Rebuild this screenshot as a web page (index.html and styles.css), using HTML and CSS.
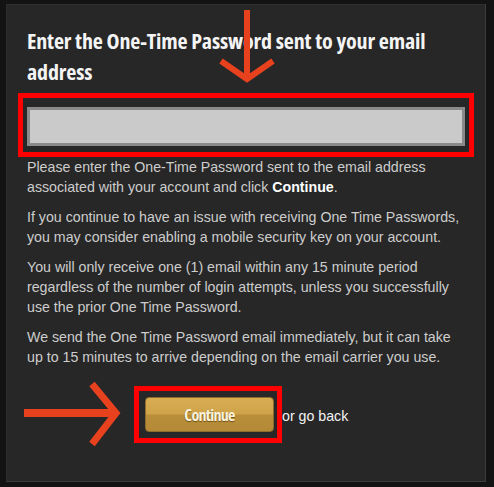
FILE: index.html
```html
<!DOCTYPE html>
<html lang="en">
<head>
    <meta charset="UTF-8">
    <title>One-Time Password</title>
    <link rel="stylesheet" href="styles.css">
</head>
<body>
    <div class="panel">
        <h1>Enter the One-Time Password sent to your email address</h1>
        <div class="highlight field">
            <input type="text" id="otp" class="otp">
        </div>
        <p>Please enter the One-Time Password sent to the email address associated with your account and click <b>Continue</b>.</p>
        <p>If you continue to have an issue with receiving One Time Passwords, you may consider enabling a mobile security key on your account.</p>
        <p>You will only receive one (1) email within any 15 minute period regardless of the number of login attempts, unless you successfully use the prior One Time Password.</p>
        <p>We send the One Time Password email immediately, but it can take up to 15 minutes to arrive depending on the email carrier you use.</p>
        <div class="actions">
            <div class="highlight">
                <button class="continue">Continue</button>
            </div>
            <span class="back">or go back</span>
        </div>
    </div>
    <svg class="arrows" width="494" height="487" viewBox="0 0 494 487">
        <g stroke="#e8411e" fill="none" stroke-linecap="butt" stroke-linejoin="miter">
            <path d="M247 10 V78" stroke-width="6"/>
            <path d="M221 61 L247 79 L273 61" stroke-width="6"/>
            <path d="M24 413 H114" stroke-width="8"/>
            <path d="M92 384 L116 413 L92 444" stroke-width="7"/>
        </g>
    </svg>
</body>
</html>
```

FILE: styles.css
```css
body {
    margin: 0;
    background: #131313;
    font-family: "Liberation Sans", Arial, sans-serif;
    position: relative;
}
.panel {
    box-sizing: border-box;
    width: 480px;
    height: 478px;
    margin: 4px 0 0 6px;
    padding: 0 20px;
    background: #272727;
    border: 1px solid #2e2e2e;
    border-right-color: #3c3c3c;
    border-bottom-color: #3c3c3c;
}
h1 {
    margin: 20px 0 6px;
    font-family: "Open Sans", sans-serif;
    font-stretch: 75%;
    font-size: 22px;
    letter-spacing: -0.15px;
    line-height: 31px;
    font-weight: bold;
    color: #f4f4f4;
}
.highlight {
    border: 5px solid #f00;
}
.field {
    margin: 0 -9px;
    padding: 9px 4px 6px;
}
.otp {
    display: block;
    box-sizing: border-box;
    width: 100%;
    height: 39px;
    margin: 0;
    border: 3px solid #8a8a8a;
    background: #cacaca;
    outline: none;
}
p {
    margin: 0 0 10px;
    font-size: 14.2px;
    line-height: 20px;
    color: #cdcdcd;
}
p b {
    color: #fff;
}
.actions {
    display: flex;
    align-items: center;
    margin: 19px 0 0 107px;
}
.actions .highlight {
    padding: 6px 3px 6px 6px;
}
.continue {
    display: block;
    width: 129px;
    height: 35px;
    padding: 0;
    border: 1px solid #8d6c2c;
    border-radius: 4px;
    background: linear-gradient(#d9ad52 0%, #cfa349 48%, #b98e3a 52%, #b58a37 100%);
    font-family: "Open Sans", sans-serif;
    font-stretch: 75%;
    font-size: 16px;
    letter-spacing: -0.7px;
    font-weight: bold;
    color: #fbf3dc;
    text-shadow: 0 1px 1px rgba(60, 40, 0, 0.6);
}
.back {
    font-size: 14.2px;
    color: #f2f2f2;
    padding-top: 2px;
}
.arrows {
    position: absolute;
    top: 0;
    left: 0;
    pointer-events: none;
}
```
